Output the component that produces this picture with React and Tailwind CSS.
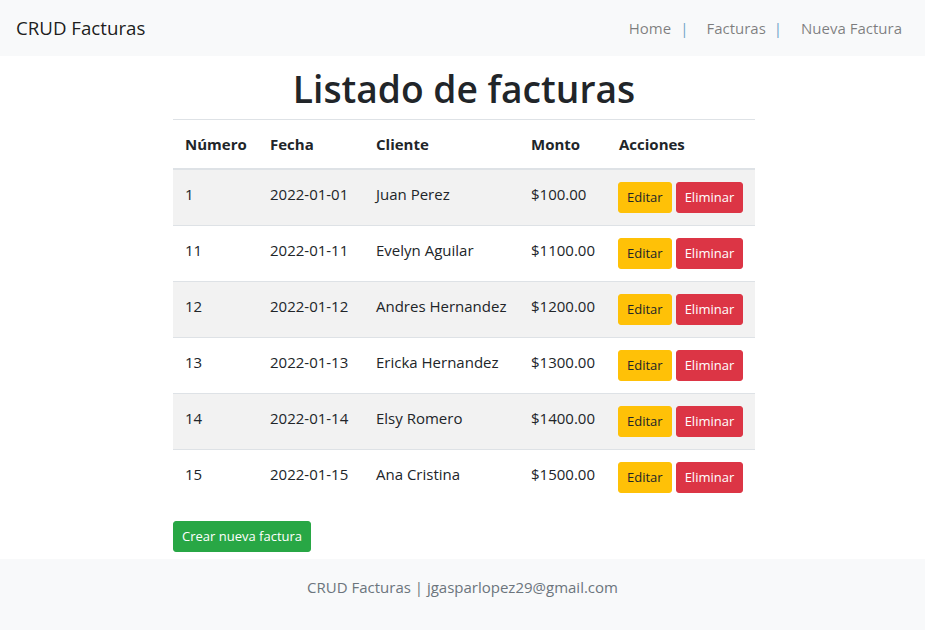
export default function App() {
  const rows = [
    ["1", "2022-01-01", "Juan Perez", "$100.00"],
    ["11", "2022-01-11", "Evelyn Aguilar", "$1100.00"],
    ["12", "2022-01-12", "Andres Hernandez", "$1200.00"],
    ["13", "2022-01-13", "Ericka Hernandez", "$1300.00"],
    ["14", "2022-01-14", "Elsy Romero", "$1400.00"],
    ["15", "2022-01-15", "Ana Cristina", "$1500.00"],
  ];
  const font = { fontFamily: '"Segoe UI", "Open Sans", "Noto Sans", sans-serif' };
  const btn = "text-[13px] leading-[21px] px-2 py-1 rounded-[3px] border";
  return (
    <div className="min-h-[630px] flex flex-col bg-white text-[#212529]" style={font}>
      <nav className="h-[56px] bg-[#f8f9fa] flex items-center justify-between pl-4 pr-[23px]">
        <span className="text-[18.7px] leading-[30px] text-[rgba(0,0,0,0.9)]">CRUD Facturas</span>
        <div className="flex items-center text-[15px] leading-6 text-[rgba(0,0,0,0.5)]">
          <span>Home</span>
          <span className="ml-[9px] text-[#6fa3c9]">|</span>
          <span className="ml-[18px]">Facturas</span>
          <span className="ml-[8px] text-[#6fa3c9]">|</span>
          <span className="ml-[19px]">Nueva Factura</span>
        </div>
      </nav>
      <main className="w-[582px] ml-[173px] flex-1">
        <h1 className="text-[37.2px] leading-[48px] font-semibold text-center mt-[9px] mb-[6px]">Listado de facturas</h1>
        <table className="w-full table-fixed border-collapse text-[15px] leading-6 mb-4">
          <colgroup>
            <col className="w-[85px]" />
            <col className="w-[106px]" />
            <col className="w-[155px]" />
            <col className="w-[88px]" />
            <col className="w-[148px]" />
          </colgroup>
          <thead>
            <tr className="border-t border-[#dee2e6] border-b-2">
              <th className="text-left font-bold p-3">Número</th>
              <th className="text-left font-bold p-3">Fecha</th>
              <th className="text-left font-bold p-3">Cliente</th>
              <th className="text-left font-bold p-3">Monto</th>
              <th className="text-left font-bold p-3">Acciones</th>
            </tr>
          </thead>
          <tbody>
            {rows.map((r, i) => (
              <tr key={i} className={`border-t border-[#dee2e6] ${i % 2 === 0 ? "bg-[#f2f2f2]" : "bg-white"}`}>
                <td className="p-3 align-top whitespace-nowrap">{r[0]}</td>
                <td className="p-3 align-top whitespace-nowrap">{r[1]}</td>
                <td className="p-3 align-top whitespace-nowrap">{r[2]}</td>
                <td className="p-3 align-top whitespace-nowrap">{r[3]}</td>
                <td className="py-3 pl-[11px] pr-0 align-top whitespace-nowrap">
                  <div className="flex gap-1">
                    <button className={`${btn} bg-[#ffc107] border-[#ffc107] text-[#212529]`}>Editar</button>
                    <button className={`${btn} bg-[#dc3545] border-[#dc3545] text-white`}>Eliminar</button>
                  </div>
                </td>
              </tr>
            ))}
          </tbody>
        </table>
        <button className={`${btn} bg-[#28a745] border-[#28a745] text-white mb-[7px]`}>Crear nueva factura</button>
      </main>
      <footer className="bg-[#f8f9fa] h-[71px] flex justify-center pt-4">
        <span className="text-[15px] leading-6 text-[#6c757d]">CRUD Facturas | jgasparlopez29@gmail.com</span>
      </footer>
    </div>
  );
}
